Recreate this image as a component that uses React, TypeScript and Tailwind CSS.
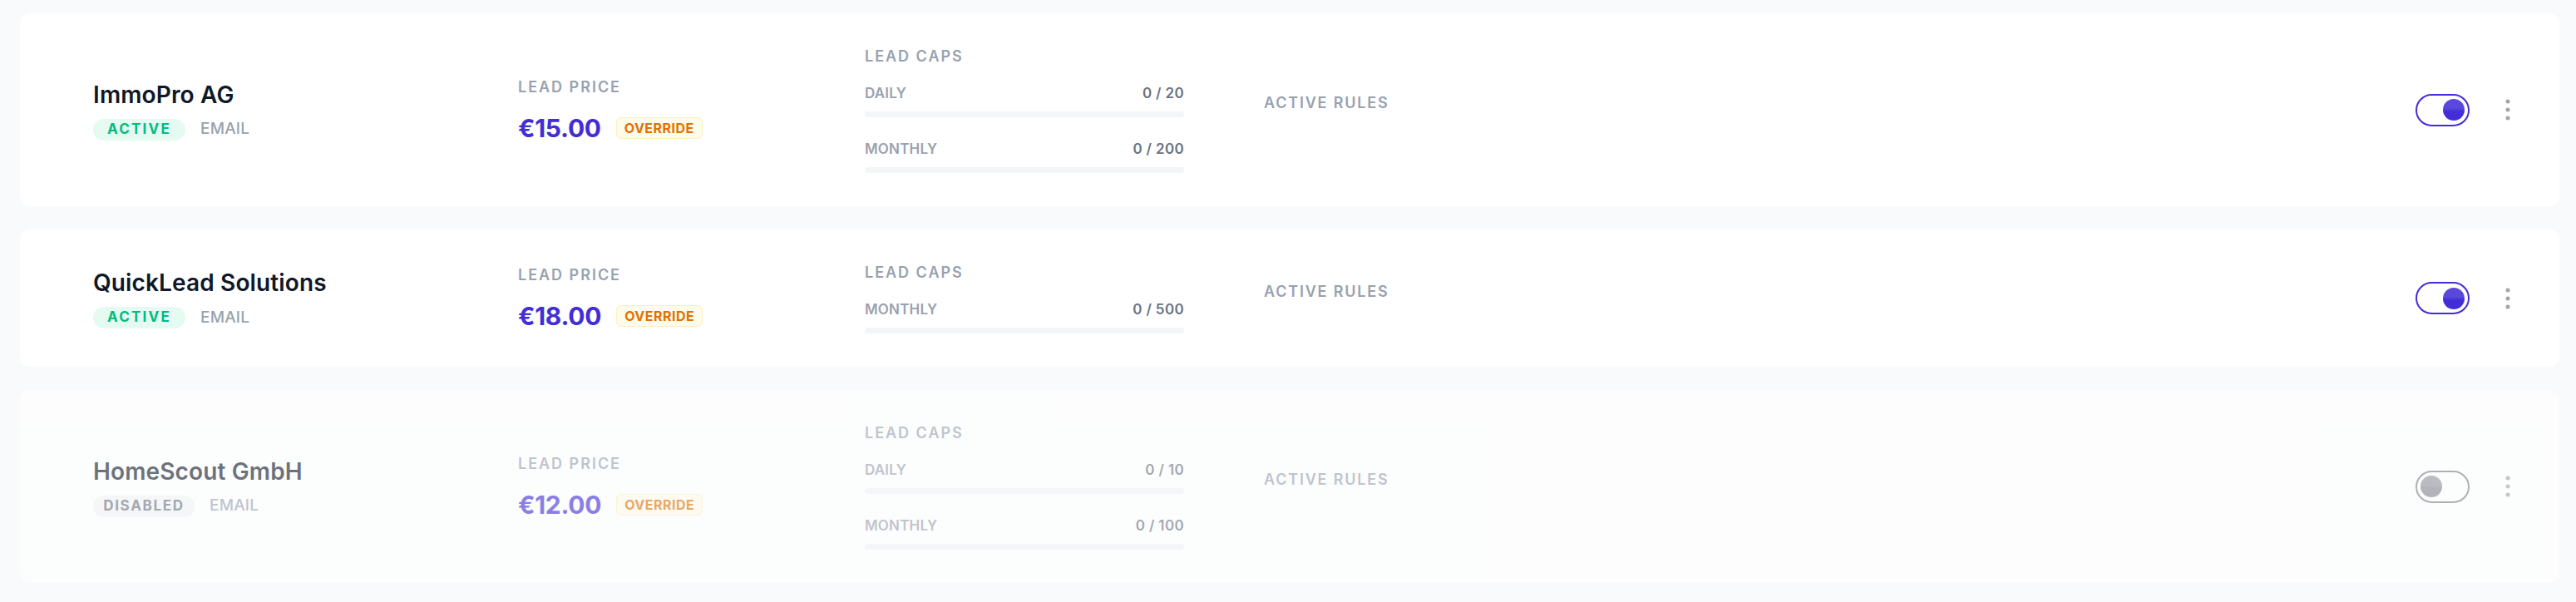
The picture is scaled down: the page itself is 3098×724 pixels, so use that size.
import React from "react";

type Cap = { label: string; value: string };
type Row = {
  name: string;
  active: boolean;
  price: string;
  caps: Cap[];
};

const rows: Row[] = [
  {
    name: "ImmoPro AG",
    active: true,
    price: "€15.00",
    caps: [
      { label: "Daily", value: "0 / 20" },
      { label: "Monthly", value: "0 / 200" },
    ],
  },
  {
    name: "QuickLead Solutions",
    active: true,
    price: "€18.00",
    caps: [{ label: "Monthly", value: "0 / 500" }],
  },
  {
    name: "HomeScout GmbH",
    active: false,
    price: "€12.00",
    caps: [
      { label: "Daily", value: "0 / 10" },
      { label: "Monthly", value: "0 / 100" },
    ],
  },
];

function Toggle({ on }: { on: boolean }) {
  return (
    <div
      className={
        on
          ? "flex h-[39px] w-[65px] shrink-0 items-center justify-end rounded-full border-2 border-[#432dd7] bg-white px-[4px]"
          : "flex h-[39px] w-[65px] shrink-0 items-center justify-start rounded-full border-2 border-[#7d808a] bg-white px-[4px]"
      }
    >
      <div
        className={
          on
            ? "h-[26px] w-[26px] rounded-full bg-[linear-gradient(180deg,#5849dc_0%,#5849dc_42%,#432dd7_58%,#432dd7_100%)] shadow-[0_0_0_2px_rgba(255,255,255,0.9),0_1px_2px_rgba(0,0,0,0.15)]"
            : "h-[26px] w-[26px] rounded-full bg-[linear-gradient(180deg,#93949b_0%,#93949b_42%,#86878e_58%,#86878e_100%)] shadow-[0_0_0_2px_rgba(255,255,255,0.9),0_1px_2px_rgba(0,0,0,0.15)]"
        }
      />
    </div>
  );
}

function Kebab() {
  return (
    <div className="flex h-[32px] w-[32px] shrink-0 items-center justify-center">
      <svg width="6" height="26" viewBox="0 0 6 26" fill="#a1a5ad">
        <circle cx="3" cy="3" r="2.5" />
        <circle cx="3" cy="13" r="2.5" />
        <circle cx="3" cy="23" r="2.5" />
      </svg>
    </div>
  );
}

function Card({ row }: { row: Row }) {
  return (
    <div
      className={
        row.active
          ? "flex items-center rounded-xl bg-white py-[40px] pl-[88px] pr-[46px]"
          : "flex items-center rounded-xl bg-white py-[40px] pl-[88px] pr-[46px] opacity-60"
      }
    >
      {/* Name column */}
      <div className="flex w-[511px] shrink-0 flex-col">
        <div className="text-[28px] font-semibold leading-[36px] tracking-[0.005em] text-[#101828]">
          {row.name}
        </div>
        <div className="mt-[11px] flex h-[26px] items-center">
          {row.active ? (
            <span className="flex h-[26px] w-[111px] items-center justify-center rounded-full bg-[#e5faf1] text-[17px] font-bold uppercase tracking-[0.13em] text-[#00bc7d]">
              Active
            </span>
          ) : (
            <span className="flex h-[26px] w-[122px] items-center justify-center rounded-full bg-[#f3f4f6] text-[17px] font-bold uppercase tracking-[0.1em] text-[#6a7282]">
              Disabled
            </span>
          )}
          <span className="ml-[18px] text-[19px] font-medium uppercase tracking-[0.01em] text-[#99a1af]">
            Email
          </span>
        </div>
      </div>

      {/* Lead price */}
      <div className="flex w-[417px] shrink-0 flex-col">
        <div className="text-[18px] font-semibold uppercase leading-6 tracking-[0.11em] text-[#99a1af]">
          Lead Price
        </div>
        <div className="mt-[19px] flex h-9 items-center">
          <span className="text-[30px] font-bold leading-9 tracking-[-0.01em] text-[#432dd7]">
            {row.price}
          </span>
          <span className="ml-[18px] flex h-[26px] items-center rounded-md border border-[#fdefbf] bg-[#fffbeb] px-[9px] text-[16px] font-bold uppercase tracking-[0.03em] text-[#e17100]">
            Override
          </span>
        </div>
      </div>

      {/* Lead caps */}
      <div className="flex w-[384px] shrink-0 flex-col">
        <div className="mb-5 text-[18px] font-semibold uppercase leading-6 tracking-[0.11em] text-[#99a1af]">
          Lead Caps
        </div>
        <div className="flex flex-col gap-[26px]">
          {row.caps.map((c) => (
            <div key={c.label} className="flex flex-col">
              <div className="flex items-center justify-between leading-6">
                <span className="text-[17px] font-semibold uppercase tracking-[0.01em] text-[#99a1af]">
                  {c.label}
                </span>
                <span className="text-[17px] font-semibold tracking-[0.02em] text-[#6a7282]">
                  {c.value}
                </span>
              </div>
              <div className="mt-[10px] h-[7px] w-full rounded-full bg-[#f4f5f7]" />
            </div>
          ))}
        </div>
      </div>

      {/* Active rules */}
      <div className="ml-[96px] flex flex-1 flex-col">
        <div className="text-[18px] font-semibold uppercase leading-6 tracking-[0.1em] text-[#99a1af]">
          Active Rules
        </div>
        <div className="h-4" />
      </div>

      <Toggle on={row.active} />
      <div className="ml-[30px]">
        <Kebab />
      </div>
    </div>
  );
}

export default function App() {
  return (
    <div
      className="min-h-screen bg-[#f9fafb] pb-5 pl-6 pr-5 pt-4"
      style={{ fontFamily: "Inter, 'Noto Sans', sans-serif" }}
    >
      <div className="flex flex-col gap-7">
        {rows.map((r) => (
          <Card key={r.name} row={r} />
        ))}
      </div>
    </div>
  );
}
